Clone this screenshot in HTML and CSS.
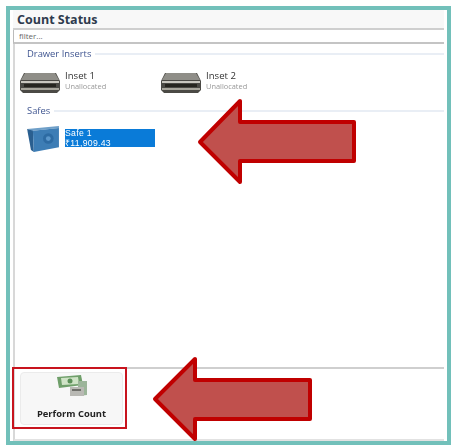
FILE: index.html
```html
<!DOCTYPE html>
<html lang="en">
<head>
    <meta charset="UTF-8">
    <meta name="viewport" content="width=device-width, initial-scale=1.0">
    <title>Count Status</title>
    <link rel="stylesheet" href="styles.css">
</head>
<body>
    <div class="frame">
        <div class="panel">
            <h1 class="title">Count Status</h1>
            <input class="filter" type="text" placeholder="filter...">
            <div class="content">
                <div class="list">
                    <div class="group-head"><span>Drawer Inserts</span></div>
                    <div class="items">
                        <div class="item">
                            <svg class="drawer-icon" viewBox="0 0 42 22">
                                <path d="M5 1 H37 L41 9 V18 L38 21 H4 L1 18 V9 Z" fill="#4b4a45"/>
                                <path d="M6 1 H36 L40 8 H2 Z" fill="#8f8e88"/>
                                <path d="M2 9 H40 V11 H2 Z" fill="#c9c7bf"/>
                                <path d="M5 12 H37 V15 H5 Z" fill="#26251f"/>
                                <path d="M2 16 H40 V18 H2 Z" fill="#a8a69c"/>
                            </svg>
                            <div class="item-text">
                                <div class="item-name">Inset 1</div>
                                <div class="item-sub">Unallocated</div>
                            </div>
                        </div>
                        <div class="item">
                            <svg class="drawer-icon" viewBox="0 0 42 22">
                                <path d="M5 1 H37 L41 9 V18 L38 21 H4 L1 18 V9 Z" fill="#4b4a45"/>
                                <path d="M6 1 H36 L40 8 H2 Z" fill="#8f8e88"/>
                                <path d="M2 9 H40 V11 H2 Z" fill="#c9c7bf"/>
                                <path d="M5 12 H37 V15 H5 Z" fill="#26251f"/>
                                <path d="M2 16 H40 V18 H2 Z" fill="#a8a69c"/>
                            </svg>
                            <div class="item-text">
                                <div class="item-name">Inset 2</div>
                                <div class="item-sub">Unallocated</div>
                            </div>
                        </div>
                    </div>
                    <div class="group-head"><span>Safes</span></div>
                    <div class="safe-row">
                        <svg class="safe-icon" viewBox="0 0 36 28">
                            <path d="M1 3 L7 4 L8 27 L5 25 Z" fill="#2a5f90"/>
                            <path d="M1 3 L34 0 L34 2 L7 5 Z" fill="#6f9fc8"/>
                            <path d="M7 5 L34 2 V22 L8 27 Z" fill="#3d7db5"/>
                            <circle cx="23" cy="13" r="5.5" fill="#2d6ba3"/>
                            <circle cx="23" cy="13" r="2.5" fill="#5b97cb"/>
                        </svg>
                        <div class="safe-text">
                            <div>Safe 1</div>
                            <div>₹11,909.43</div>
                        </div>
                    </div>
                </div>
                <div class="toolbar">
                    <button class="count-btn">
                        <svg class="money-icon" viewBox="0 0 32 23">
                            <path d="M1 3 L25 1 L27 11 L3 14 Z" fill="#6f9f6a"/>
                            <path d="M5 4 L22 3 L23 10 L6 11 Z" fill="#cfe3c6"/>
                            <circle cx="14" cy="7" r="2.5" fill="#5b8f58"/>
                            <path d="M22 7 H31 V21 L22 22 Z" fill="#9cb59a"/>
                            <rect x="14" y="13" width="14" height="9" fill="#b9b9b4"/>
                            <rect x="16" y="15" width="9" height="2" fill="#6f6f6a"/>
                        </svg>
                        <span>Perform Count</span>
                    </button>
                </div>
            </div>
        </div>
    </div>

    <svg class="arrow arrow-top" viewBox="0 0 162 88">
        <path d="M3 44 L43 3 V24 H157 V63 H43 V84 Z" fill="#c0504d" stroke="#c00000" stroke-width="4" stroke-linejoin="round"/>
    </svg>
    <svg class="arrow arrow-bottom" viewBox="0 0 162 88">
        <path d="M3 43 L43 3 V24 H158 V63 H43 V83 Z" fill="#c0504d" stroke="#c00000" stroke-width="4" stroke-linejoin="round"/>
    </svg>
    <div class="red-box"></div>
</body>
</html>
```

FILE: styles.css
```css
body {
    margin: 0;
    background-color: #fff;
    font-family: "Open Sans", "Liberation Sans", sans-serif;
}

.frame {
    box-sizing: border-box;
    width: 445px;
    height: 439px;
    margin: 6px 0 0 6px;
    border: 4px solid #72c0ba;
    background-color: #fff;
}

.panel {
    box-sizing: border-box;
    height: 100%;
    padding: 0 3px 0 3px;
    display: flex;
    flex-direction: column;
    filter: blur(0.5px);
}

.title {
    box-sizing: border-box;
    height: 20px;
    margin: 0;
    padding: 2px 0 0 4px;
    font-size: 12.5px;
    line-height: 15px;
    font-weight: 700;
    color: #2f3b4e;
    background-color: #f8f8f8;
    border-bottom: 2px solid #cfcfcf;
}

.filter {
    box-sizing: border-box;
    width: 100%;
    height: 14px;
    margin: 0;
    padding: 0 0 2px 5px;
    border: 0;
    border-left: 1px solid #bbb;
    border-bottom: 2px solid #c4c4c4;
    font-family: inherit;
    font-size: 8px;
    color: #666;
    background-color: #fff;
    outline: none;
}

.filter::placeholder {
    color: #666;
    opacity: 1;
}

.content {
    flex: 1;
    display: flex;
    flex-direction: column;
    border-left: 2px solid #d8d8d8;
    border-bottom: 2px solid #e2e2e2;
}

.list {
    flex: 1;
    padding-top: 3px;
}

.group-head {
    display: flex;
    align-items: center;
    gap: 4px;
    height: 13px;
    padding-left: 12px;
    font-size: 9.4px;
    color: #3f5590;
}

.group-head::after {
    content: "";
    flex: 1;
    height: 2px;
    background-color: #e9eef5;
}

.items {
    display: flex;
    gap: 99px;
    height: 44px;
    padding: 12px 0 0 4px;
    box-sizing: border-box;
}

.item {
    display: flex;
    gap: 4px;
    width: 42px;
    white-space: nowrap;
}

.drawer-icon {
    flex: none;
    width: 42px;
    height: 22px;
}

.item-text {
    margin-top: -1px;
    line-height: 10px;
    color: #333;
}

.item-name {
    font-size: 9.6px;
}

.item-sub {
    font-size: 7.4px;
    color: #999;
}

.safe-row {
    display: flex;
    align-items: center;
    gap: 4px;
    padding: 9px 0 0 11px;
}

.safe-icon {
    flex: none;
    width: 35px;
    height: 27px;
}

.safe-text {
    box-sizing: border-box;
    display: flex;
    flex-direction: column;
    justify-content: center;
    width: 90px;
    height: 18px;
    margin-bottom: 4px;
    font-family: "Liberation Sans", sans-serif;
    font-size: 8.7px;
    line-height: 10px;
    letter-spacing: 0.3px;
    color: #fff;
    background-color: #0a7bd8;
}

.toolbar {
    height: 72px;
    box-sizing: border-box;
    border-top: 2px solid #cfcfcf;
    padding: 3px 0 0 5px;
}

.count-btn {
    box-sizing: border-box;
    display: flex;
    flex-direction: column;
    align-items: center;
    width: 103px;
    height: 53px;
    padding: 1px 0 0;
    border: 1px solid #ebebeb;
    border-radius: 4px;
    background-color: #f7f7f7;
    font-family: inherit;
    font-size: 9.4px;
    font-weight: 700;
    color: #222;
}

.money-icon {
    width: 32px;
    height: 23px;
    margin-bottom: 10px;
}

/* callouts drawn over the screenshot */
.arrow {
    position: absolute;
    width: 162px;
    height: 88px;
}

.arrow-top {
    left: 197px;
    top: 98px;
}

.arrow-bottom {
    left: 152px;
    top: 356px;
}

.red-box {
    position: absolute;
    left: 12px;
    top: 367px;
    width: 111px;
    height: 58px;
    border: 2px solid #c8141e;
}
```
